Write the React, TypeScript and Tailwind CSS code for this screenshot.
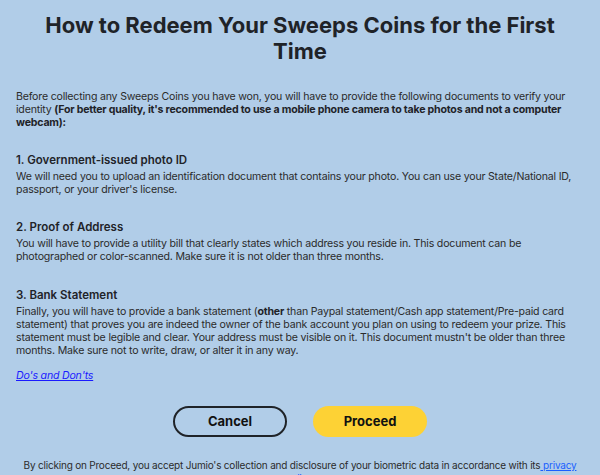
export default function App() {
  return (
    <div
      className="min-h-screen bg-[#b1cde8] px-4 pt-3 text-[#2b2b2b]"
      style={{ fontFamily: "Inter, 'Noto Sans', sans-serif" }}
    >
      <h1 className="px-4 text-center text-[22px] font-bold leading-[26px] text-[#1f2328]">
        How to Redeem Your Sweeps Coins for the First Time
      </h1>

      <p className="mt-[26px] text-[10.6px] leading-[13px] tracking-[-0.2px]">
        Before collecting any Sweeps Coins you have won, you will have to provide the following
        documents to verify your identity{" "}
        <span className="font-bold text-[#1f2328]">
          (For better quality, it's recommended to use a mobile phone camera to take photos and not
          a computer webcam)
        </span>
        <span className="font-bold text-[#1f2328]">:</span>
      </p>

      <h2 className="mt-6 text-[11.5px] font-semibold leading-[15px] text-[#1f2328]">
        1. Government-issued photo ID
      </h2>
      <p className="mt-[2px] text-[10.6px] leading-[13px] tracking-[-0.2px]">
        We will need you to upload an identification document that contains your photo. You can use
        your State/National ID, passport, or your driver's license.
      </p>

      <h2 className="mt-6 text-[11.5px] font-semibold leading-[15px] text-[#1f2328]">
        2. Proof of Address
      </h2>
      <p className="mt-[2px] text-[10.6px] leading-[13px] tracking-[-0.2px]">
        You will have to provide a utility bill that clearly states which address you reside in.
        This document can be photographed or color-scanned. Make sure it is not older than three
        months.
      </p>

      <h2 className="mt-[25px] text-[11.5px] font-semibold leading-[15px] text-[#1f2328]">
        3. Bank Statement
      </h2>
      <p className="mt-[2px] text-[10.6px] leading-[13px] tracking-[-0.2px]">
        Finally, you will have to provide a bank statement (
        <span className="font-bold text-[#1f2328]">other</span> than Paypal statement/Cash app
        statement/Pre-paid card statement) that proves you are indeed the owner of the bank account
        you plan on using to redeem your prize. This statement must be legible and clear. Your
        address must be visible on it. This document mustn't be older than three months. Make sure
        not to write, draw, or alter it in any way.
      </p>

      <a
        href="#"
        className="mt-3 block text-[10.6px] italic leading-[13px] tracking-[-0.2px] text-[#1a1aff] underline"
      >
        Do's and Don'ts
      </a>

      <div className="mt-6 flex justify-center gap-[26px]">
        <button className="h-[31px] w-[114px] rounded-full border-2 border-[#1f2328] text-[13px] font-bold text-[#111]">
          Cancel
        </button>
        <button className="h-[31px] w-[114px] rounded-full bg-[#fdd235] text-[13px] font-bold text-[#111]">
          Proceed
        </button>
      </div>

      <p className="mt-[22px] text-center text-[10px] leading-[13px] tracking-[-0.2px]">
        By clicking on Proceed, you accept Jumio's collection and disclosure of your biometric data
        in accordance with its
        <a href="#" className="text-[#1a5fff] underline">
          {" "}
          privacy policy
        </a>
        .
      </p>
    </div>
  );
}
